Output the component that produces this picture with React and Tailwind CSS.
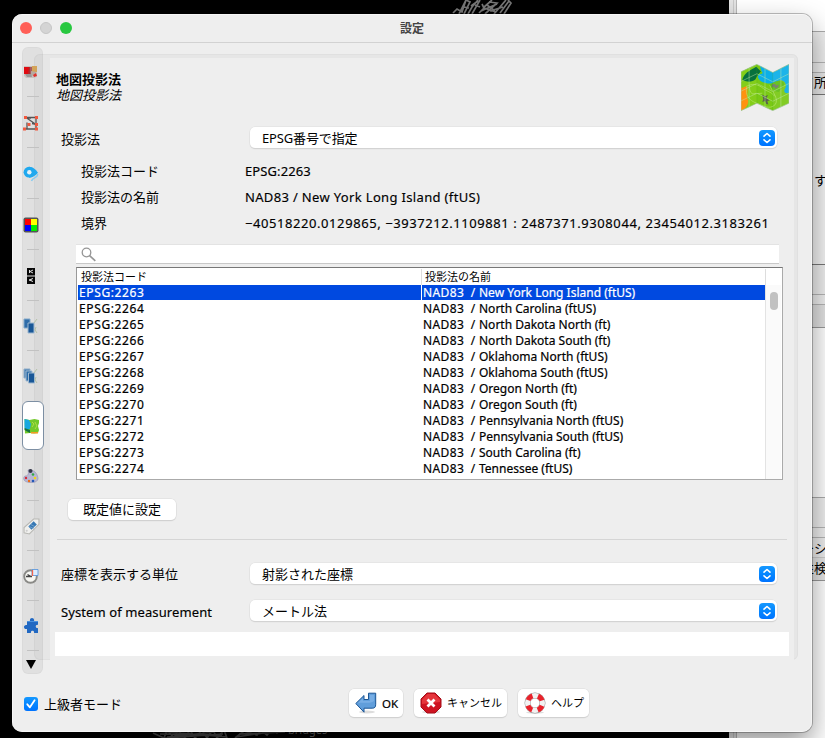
import React from 'react';

const codes = [
  ['2263', 'New York Long Island (ftUS)'],
  ['2264', 'North Carolina (ftUS)'],
  ['2265', 'North Dakota North (ft)'],
  ['2266', 'North Dakota South (ft)'],
  ['2267', 'Oklahoma North (ftUS)'],
  ['2268', 'Oklahoma South (ftUS)'],
  ['2269', 'Oregon North (ft)'],
  ['2270', 'Oregon South (ft)'],
  ['2271', 'Pennsylvania North (ftUS)'],
  ['2272', 'Pennsylvania South (ftUS)'],
  ['2273', 'South Carolina (ft)'],
  ['2274', 'Tennessee (ftUS)'],
];

function MapIcon({ className }) {
  return (
    <svg viewBox="0 0 142 140" preserveAspectRatio="none" className={className}>
      <clipPath id="fold">
        <path d="M0 23 47 1 94 25 142 1V117L94 139 47 117 0 139Z" />
      </clipPath>
      <g clipPath="url(#fold)">
        <rect width="142" height="140" fill="#79c914" />
        <path d="M0 0h47v118L0 140Z" fill="#83ce19" />
        <path d="M54 0h88v86c-12 3-16-3-13-11 7-9 4-22-8-26-12-2-20 8-31 9-15 2-38-5-40-19 0-6 3-8 9-9 7-2 5-5 2-8Z" fill="#0bafe8" />
        <path d="M4 48C8 27 25 20 45 8l14 14c-6 5-11 12-14 20-3 11-22 14-41 6Z" fill="#08713d" />
        <path d="M0 70c6 3 12-5 17-4 6 14-2 25 4 43 2 9-5 24-21 31Z" fill="#ff9210" />
        <path d="M84 64c13-14 37-20 43-8 5 12-10 16-14 27-11 1-20-8-29-19Z" fill="#5fbe12" />
        <path d="m92 61 8-2 4 5 8-3-2 8-9 5-2-6-8 1Z" fill="#6f7b68" />
        <path d="m62 91 9 5 9-4-5 9 10 8-7 1 3 11-6-2-4-9-8 3 3-9Z" fill="#59634b" />
        <g fill="none" stroke="#b5e667" strokeWidth="2">
          <path d="M18 68c-8 24 8 42 27 48 18 7 40 22 56 5 12-17-8-37-16-58M15 67c17-9 34-9 51 6 10 9 21 8 34 23M26 62c-2 13 0 20 7 27l30-2" />
        </g>
        <path d="M24 12v116M71 13v116M118 13v116M0 52l47-23 47 24 48-24M0 81l47-23 47 24 48-24M0 110l47-23 47 24 48-24" stroke="#c0e6aa" strokeWidth="1.7" fill="none" opacity=".8" />
        <path d="M47 0v140M142 0H94v140" stroke="#43a61c" strokeWidth="1.5" opacity=".4" fill="none" />
        <path d="M94 0h48v140H94Z" fill="#fff" opacity=".07" />
      </g>
      <path d="M0 23 47 1 94 25 142 1V117L94 139 47 117 0 139Z" fill="none" stroke="#a9c7a8" strokeWidth="2" />
    </svg>
  );
}

const tabIcons = [
  <svg viewBox="0 0 16 16" className="size-[16px]">
    <path d="M1 2h13v11l-3 1H3l-2-2Z" fill="#c9c3c0" /><path d="M1 3h6v7H1Z" fill="#e00b12" />
    <path d="M6 3h3v7H5Z" fill="#9b3a3e" opacity=".75" /><path d="M9 2h5v6H9Z" fill="#d4a45a" />
    <path d="m8 7 5 1-1 3-4 1Z" fill="#b5aaa0" /><path d="m10 11 3-2 1 3-3 1Z" fill="#e0322c" /><path d="M2 10h6l1 3H4Z" fill="#999" />
  </svg>,
  <svg viewBox="0 0 16 16" className="size-[16px]">
    <path d="M3 2.500h10v7L9 8.500M3 2.500 13 9.500M3 3l5 0M3 14h11M4 7.500v6M13 9v5" fill="none" stroke="#555" strokeWidth="1.300" />
    <g fill="#f2583e"><path d="M1 1h3v3H1ZM12 1h3v3h-3ZM4.500 8h3v3h-3ZM12 8h3v3h-3ZM0 12.500h3v3H0ZM12 12.500h3v3h-3Z" /></g>
  </svg>,
  <svg viewBox="0 0 16 16" className="size-[16px]">
    <path d="M6 .8c4 0 7 3 9 6-2 2-5 5-9 5Z" fill="#20a9ef" />
    <circle cx="6" cy="6.200" r="5.400" fill="#20a9ef" /><circle cx="6.300" cy="6.200" r="2.200" fill="#e4f1f8" />
    <path d="M14.500 8c1 4-5 3-6 7" fill="none" stroke="#8accef" strokeWidth="1.500" />
  </svg>,
  <svg viewBox="0 0 16 16" className="size-[16px]">
    <rect x=".5" y=".5" width="15" height="15" rx="2" fill="#555" />
    <path d="M2 2h6v6H2Z" fill="#f00" /><path d="M8 2h6v6H8Z" fill="#ff0" /><path d="M2 8h6v6H2Z" fill="#00f" /><path d="M8 8h6v6H8Z" fill="#0e0" />
  </svg>,
  <svg viewBox="0 0 16 16" className="size-[16px]">
    <path d="M4 0h8v7.500H4ZM4 8.500h8V16H4Z" fill="#070707" />
    <path d="m10 2-3 1.500L10 5M6.500 2v3M10 10.500l-4 1.500 4 1.500M8 11v2" fill="none" stroke="#ddd" strokeWidth="1" />
  </svg>,
  <svg viewBox="0 0 16 16" className="size-[16px]">
    <path d="M1 1h6v9H1Z" fill="#2f6ca8" stroke="#83a9ca" /><path d="M5 5h6v10H5Z" fill="#195797" stroke="#9db8d0" />
    <path d="m11 5 3-4M13 9l-1 3 2 3" stroke="#b5c2a6" fill="none" />
  </svg>,
  <svg viewBox="0 0 16 16" className="size-[16px]">
    <path d="M1 1h6v9H1Z" fill="#4b80b4" stroke="#8fadc8" /><path d="M3 3h6v10H3Z" fill="#2c6ca9" stroke="#a0b9d0" /><path d="M5.500 5h6v10h-6Z" fill="#195797" stroke="#9db8d0" />
    <path d="m11 5 3-4M13 9l-1 3 2 3" stroke="#b5c2a6" fill="none" />
  </svg>,
  <svg viewBox="0 0 16 16" className="size-[16px]">
    <path d="m.5 1 5 1 5-1 4.500 1v3l-1 3 1 4-1 3-4 .5-4-.5-5 .5Z" fill="#72c92b" />
    <path d="M.5 1 5 2l2 4-1 5-3 1-2.500-2Z" fill="#18a8df" /><path d="M.5 10 6 12v3l-5.500-3Z" fill="#16713e" />
    <path d="M7 14h7v1.500H7Z" fill="#f59a24" /><path d="m8 4 2 2-2 3M11 4l2 4-2 3" stroke="#b1db48" fill="none" />
  </svg>,
  <svg viewBox="0 0 16 16" className="size-[16px]">
    <path d="M5 2c6-1 10 4 10 9-1 4-7 4-11 3-4-1-4-5-2-6 3 0 4-2 3-6Z" fill="#b9b7d4" stroke="#9292b2" strokeWidth=".6" />
    <circle cx="7.500" cy="3" r="2" fill="#343849" /><circle cx="3" cy="10" r="1.200" fill="#d52b3b" /><circle cx="6" cy="13" r="1.200" fill="#ed6d17" />
    <circle cx="10" cy="13" r="1.300" fill="#2359b8" /><circle cx="12" cy="10" r="1.300" fill="#f0d51e" /><circle cx="10" cy="6.500" r="1.300" fill="#32aa43" />
  </svg>,
  <svg viewBox="0 0 16 16" className="size-[17px]">
    <path d="M10 1h5v5l-9 9-5-1V9Z" fill="#f0f0ee" stroke="#b8b8b4" /><path d="m5 8 5-5 3 3-5 5Z" fill="#3779b4" />
    <path d="m6 8 4 2M7 6l4 2" stroke="#84abd0" strokeWidth=".7" /><circle cx="3.500" cy="12" r="1" fill="#ccc" />
  </svg>,
  <svg viewBox="0 0 16 16" className="size-[16px]">
    <circle cx="7.500" cy="8.500" r="6.300" fill="#f7f7f3" stroke="#8a8a87" strokeWidth="1.900" />
    <path d="M9 1.500h6v6H9Z" fill="#dcecff" stroke="#5090db" strokeWidth=".8" /><path d="M3 8.500h6M4.500 6.500 8 8.500" fill="none" stroke="#444" strokeWidth="1.300" /><path d="M9.500 2v6" stroke="#f1654e" strokeWidth="1.300" />
  </svg>,
  <svg viewBox="0 0 16 16" className="size-[16px]">
    <path d="M4 3h3c-1-4 5-4 4 0h4v4c-3-1-3 4 0 3v5h-4c1-3-4-3-3 0H4v-4c-4 1-4-5 0-4Z" fill="#2168c2" /><path d="M4 3.500h11" stroke="#4b92df" />
  </svg>,
];

function Select({ children }) {
  return (
    <div className="flex h-[21px] w-[527px] items-center justify-between rounded-[5px] bg-white pr-[2px] pl-[12px] shadow-[0_0_0_0.5px_#dedede,0_1px_1px_#c4c4c4]">
      <span>{children}</span>
      <svg viewBox="0 0 16 16" className="size-[16px] rounded-[4px] bg-gradient-to-b from-[#1598ff] to-[#0073ff]">
        <path d="m5 6.200 3-2.700 3 2.700M5 9.800l3 2.700 3-2.700" fill="none" stroke="#fff" strokeWidth="1.600" strokeLinecap="round" strokeLinejoin="round" />
      </svg>
    </div>
  );
}

function Button({ children, className }) {
  return <button className={`flex items-center rounded-[5px] bg-white shadow-[0_0_0_0.5px_#dadada,0_1px_1px_#c4c4c4] ${className}`}>{children}</button>;
}

function Desktop() {
  return (
    <div className="flex h-full">
      <div className="relative w-[729px] bg-black">
        <svg viewBox="0 0 729 14" className="absolute top-0 left-0 h-[14px] w-[729px]">
          <g fill="none" stroke="#777" strokeWidth="1.700">
            <path d="m453 13 4-4 5 3 4-12M459 14l7-14 4 2-6 12M468 14l4-7 6-7M471 6l7-5M472 14l8-14M479 13l5-5-2-4M483 8l9-8M485 14l12-11-8-1M481 11l16-7M484 8l12 4M490 11l13-4M494 14l12-14M500 13l9-12M504 14l7-11-3-3M464 7l5 1M475 5l5 2M487 5l8 6" />
          </g>
        </svg>
        <svg viewBox="0 0 729 8" className="absolute bottom-0 left-0 h-[8px] w-[729px]">
          <g fill="none" stroke="#454545" strokeWidth="1.700">
            <path d="m153 3 11 5 3-8 7 8 4-8 7 8 5-8 5 8 7-8 5 8 6-8 4 8 7-8 3 8M157 1l70 6M160 4l62 1M165 8l58-4M167 7l48-5M235 8l9-7 13 4 4-5 6 5 5-6 5 4 6-4M239 4l46-2M236 7l40-6" />
          </g>
        </svg>
        <div className="absolute bottom-[2px] left-[288px] font-['Noto_Sans'] text-[11px] leading-[12px] text-[#666]">bridges</div>
      </div>
      <div className="w-[8px] border-r border-[#b9b9b9] bg-[#e4e4e4]"><div className="h-full w-[5px] border-r border-[#cacaca]" /></div>
      <div className="-mr-[2px] flex w-[90px] flex-col bg-[#f3f3f3] text-right font-['Noto_Sans_CJK_JP',sans-serif] text-[13px] whitespace-nowrap">
        <div className="h-[32px] border-b border-[#aaa] bg-white" />
        <div className="h-[31px] border-b border-[#b5b5b5] bg-[#eee]" />
        <div className="h-[10px] border-b border-[#b5b5b5] bg-[#eee]" />
        <div className="flex h-[22px] items-center justify-end border-b border-[#777] bg-[#e8e8e8] pb-[3px]">イ所</div>
        <div className="flex h-[170px] items-center justify-end border-b border-[#777]">す</div>
        <div className="h-[30px] border-b border-[#b5b5b5] bg-[#eee]" />
        <div className="h-[10px] border-b border-[#b5b5b5] bg-[#eee]" />
        <div className="h-[23px] border-b border-[#999] bg-[#e2e2e2]" />
        <div className="h-[170px] border-b border-[#aaa] bg-white" />
        <div className="h-[30px] border-b border-[#b5b5b5] bg-[#eee]" />
        <div className="h-[10px] border-b border-[#b5b5b5] bg-[#eee]" />
        <div className="flex h-[20px] items-center justify-end border-b border-[#ccc] bg-[#ededed]">ーシ</div>
        <div className="flex h-[23px] items-center justify-end border-b border-[#999] bg-[#e6e6e6] pb-[3px]">性検</div>
        <div className="flex-1 bg-white" />
      </div>
    </div>
  );
}

function Sidebar() {
  return (
    <div className="z-10 flex h-[627px] w-[21px] flex-col items-center rounded-[6px] bg-black/[0.055] shadow-[inset_0_0_0_1px_rgba(0,0,0,0.025)]">
      {tabIcons.map((icon, i) => (
        <div key={i} className={`relative flex w-full shrink-0 items-center justify-center pr-[3px] ${i > 0 && i < 5 ? 'h-[51px]' : 'h-[50px]'}`}>
          {i === 7 ? <div className="absolute -right-px left-0 top-0 flex h-[49px] items-center justify-center rounded-[6px] border-[1.5px] border-[#7d8fa3] bg-white pr-[3px]">{icon}</div> : icon}
          {i !== 6 && i !== 7 && <div className="absolute bottom-0 left-[5px] h-px w-[12px] bg-[#c2c2c2]" />}
        </div>
      ))}
      <svg viewBox="0 0 10 9" className="mt-[9px] mr-[3px] h-[9px] w-[10px]"><path d="M0 0h10L5 9Z" fill="#000" /></svg>
    </div>
  );
}

function CodeTable() {
  return (
    <div className="mt-[4px] ml-[26px] h-[213px] w-[707px] border border-t-[#777] border-r-[#aaa] border-b-[#aaa] border-l-[#999] bg-white">
      <div className="flex h-[17px] items-center text-[11px] leading-[15px]">
        <div className="w-[345px] border-r border-[#ddd] pb-px pl-[4px]">投影法コード</div>
        <div className="w-[344px] border-r border-[#ddd] pb-px pl-[3px]">投影法の名前</div>
      </div>
      <div className="flex">
        <div className="w-[688px] pl-px text-[12px] leading-[16px] [-webkit-text-stroke:0.2px]">
          {codes.map(([code, name], i) => (
            <div key={code} className={`flex h-[16px] ${i === 0 ? 'text-white' : ''}`}>
              <div className={`mr-px h-[15px] w-[343px] pl-px tracking-[0.62px] ${i === 0 ? 'bg-[#0049e0]' : ''}`}>EPSG:{code}</div>
              <div className={`flex h-[15px] flex-1 pl-px ${i === 0 ? 'bg-[#0049e0]' : ''}`}>
                <span className="w-[56px] tracking-[0.4px] [word-spacing:3px]">NAD83 /</span>
                <span>{name}</span>
              </div>
            </div>
          ))}
        </div>
        <div className="flex h-[194px] w-[16px] justify-center border-l border-[#e3e3e3] bg-[#fafafa] pt-[7px]">
          <div className="h-[18px] w-[8px] rounded-full bg-[#c1c1c1]" />
        </div>
      </div>
    </div>
  );
}

function Panel() {
  return (
    <div className="-ml-[9px] mt-[7px] h-[606px] w-[764px] rounded-[6px] bg-[#e6e6e6] pt-[4px] pl-[16px] shadow-[inset_0_0_0_1px_#e0e0e0]">
      <div className="flex h-[603px] w-[744px] flex-col bg-[#eee]">
        <div className="flex h-[61px] justify-between pt-[5px] pr-[5px] pl-[6px]">
          <div className="pt-[8px] leading-[16px]">
            <div className="font-bold">地図投影法</div>
            <div className="italic">地図投影法</div>
          </div>
          <MapIcon className="mt-px h-[47px] w-[48px]" />
        </div>
        <div className="mt-[8px] flex h-[21px] items-center pl-[11px]"><div className="w-[189px] pt-[2px]">投影法</div><Select><span className="tracking-[-0.15px]">EPSG番号で指定</span></Select></div>
        <div className="mt-[10px] flex flex-col pl-[31px] leading-[26px]">
          <div className="flex"><div className="w-[164px]">投影法コード</div><div className="tracking-[0.1px] [-webkit-text-stroke:0.15px]">EPSG:2263</div></div>
          <div className="flex"><div className="w-[164px]">投影法の名前</div><div className="tracking-[0.34px] [-webkit-text-stroke:0.15px]">NAD83 / New York Long Island (ftUS)</div></div>
          <div className="flex"><div className="w-[164px]">境界</div><div className="tracking-[0.57px] [-webkit-text-stroke:0.15px]">−40518220.0129865, −3937212.1109881 : 2487371.9308044, 23454012.3183261</div></div>
        </div>
        <div className="mt-[9px] ml-[26px] flex h-[18px] w-[703px] shrink-0 items-center bg-white pl-[5px] shadow-[0_1px_0_#c8c8c8,0_-1px_0_#e3e3e3]">
          <svg viewBox="0 0 15 15" className="size-[15px]" fill="none" stroke="#969696" strokeWidth="1.300"><circle cx="5.500" cy="5.500" r="4.300" /><path d="m8.600 8.600 5.700 5.200" strokeWidth="1.700" /></svg>
        </div>
        <CodeTable />
        <Button className="mt-[19px] ml-[18px] h-[21px] w-[108px] shrink-0 justify-center pb-[2px]">既定値に設定</Button>
        <div className="mt-[19px] ml-[7px] h-px w-[730px] shrink-0 bg-[#d5d5d5]" />
        <div className="mt-[23px] flex h-[21px] items-center pl-[11px]"><div className="w-[189px] pt-px">座標を表示する単位</div><Select>射影された座標</Select></div>
        <div className="mt-[16px] flex h-[21px] items-center pl-[11px]"><div className="w-[189px] pt-[2px] tracking-[0.1px] [-webkit-text-stroke:0.15px]">System of measurement</div><Select>メートル法</Select></div>
        <div className="mt-[11px] ml-[5px] h-[24px] w-[734px] shrink-0 bg-white" />
      </div>
    </div>
  );
}

function Footer() {
  return (
    <div className="mt-[15px] flex h-[28px] items-center pl-[12px]">
      <div className="flex w-[325px] items-center gap-[6px] pt-px">
        <svg viewBox="0 0 14 14" className="size-[14px] rounded-[3px] bg-gradient-to-b from-[#1598ff] to-[#0073ff]"><path d="m3.300 7.300 2.600 3 4.700-7" fill="none" stroke="#fff" strokeWidth="1.800" strokeLinecap="round" strokeLinejoin="round" /></svg>
        <span>上級者モード</span>
      </div>
      <div className="flex gap-[11px] text-[11px]">
        <Button className="h-[28px] w-[54px] gap-[5px] pl-[6px]">
          <svg viewBox="0 0 22 22" className="size-[22px]"><ellipse cx="12" cy="20" rx="8" ry="1.500" fill="#ddd" /><path d="M.8 11.500 9 3.500v4h4.500V1.200h7.200v11c0 3-1 4-3.500 4H9v4Z" fill="#609edb" stroke="#1b5594" /><path d="m3 11 5-5v3h7V3h4v6c-4 3-9 1-16 2Z" fill="#8cbced" opacity=".55" /></svg>
          <span className="pt-px text-[11.500px] [-webkit-text-stroke:0.2px]">OK</span>
        </Button>
        <Button className="h-[28px] w-[93px] gap-[5px] pl-[6px]">
          <svg viewBox="0 0 22 22" className="size-[22px] shrink-0"><ellipse cx="11" cy="20" rx="9" ry="1.500" fill="#ddd" /><path d="M7 1h8l6 6v8l-6 6H7l-6-6V7Z" fill="#ce1421" stroke="#a50d18" /><path d="M7.500 2h7l5.500 5.500V10L2 12V7.500Z" fill="#f04449" opacity=".7" /><path d="m7.500 7.500 7 7m0-7-7 7" stroke="#fff" strokeWidth="2.800" /></svg>
          <span className="whitespace-nowrap">キャンセル</span>
        </Button>
        <Button className="h-[28px] w-[71px] gap-[5px] pl-[6px]">
          <svg viewBox="0 0 22 22" className="size-[22px] shrink-0"><ellipse cx="11" cy="20.500" rx="9" ry="1.200" fill="#ddd" /><circle cx="11" cy="11" r="7.500" fill="none" stroke="#999" strokeWidth="6" /><circle cx="11" cy="11" r="7.500" fill="none" stroke="#f2f2f2" strokeWidth="5" /><circle cx="11" cy="11" r="7.500" fill="none" stroke="#e8222b" strokeWidth="5" strokeDasharray="6.200 5.581" strokeDashoffset="-2.790" /></svg>
          <span className="whitespace-nowrap">ヘルプ</span>
        </Button>
      </div>
    </div>
  );
}

export default function App() {
  return (
    <div className="relative h-[738px] w-[825px] overflow-hidden bg-black">
      <Desktop />
      <div className="absolute top-[14px] left-[12px] h-[718px] w-[800px] overflow-hidden rounded-[10px] bg-[#eee] font-['Noto_Sans','Noto_Sans_CJK_JP',sans-serif] text-[13px] leading-[18px] whitespace-nowrap text-black shadow-[inset_0_0_0_0.5px_#fff,0_0_0_1px_rgba(0,0,0,0.25),0_12px_28px_rgba(0,0,0,0.42)]">
        <div className="grid h-[29px] grid-cols-[1fr_auto_1fr] items-center border-b border-[#d2d2d2]">
          <div className="flex gap-[8px] pl-[8px]">
            <div className="size-[12px] rounded-full bg-[#ff5f57]" />
            <div className="size-[12px] rounded-full border border-[#c5c5c5] bg-[#d4d4d4]" />
            <div className="size-[12px] rounded-full bg-[#28c840]" />
          </div>
          <div className="pt-px text-[12px] font-bold text-[#444]">設定</div>
          <div />
        </div>
        <div className="flex pt-[4px] pl-[10px]"><Sidebar /><Panel /></div>
        <Footer />
      </div>
    </div>
  );
}
